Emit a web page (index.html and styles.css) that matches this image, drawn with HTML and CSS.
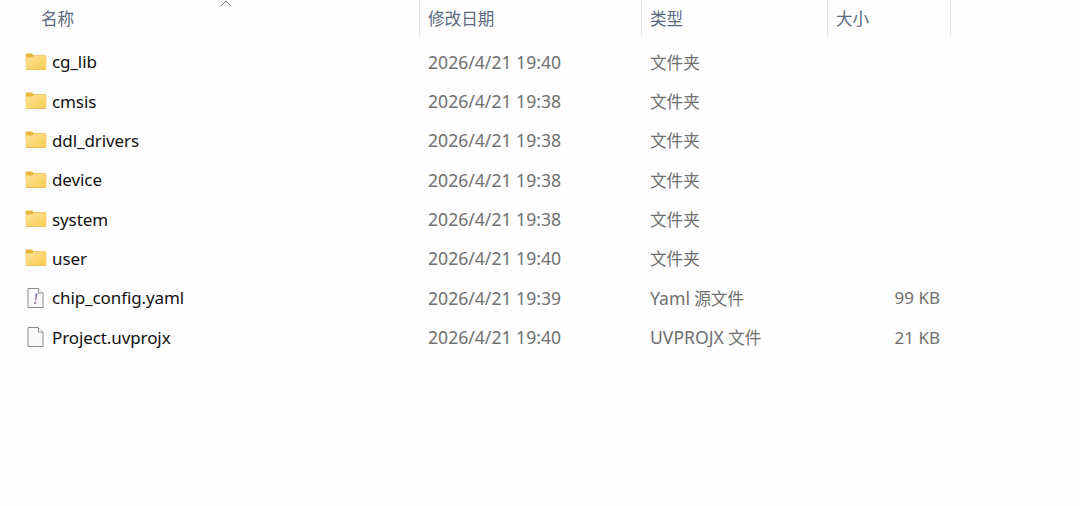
FILE: index.html
```html
<!DOCTYPE html>
<html lang="zh-CN">
<head>
  <meta charset="UTF-8">
  <title>Project</title>
  <link rel="stylesheet" href="styles.css">
</head>
<body>

  <!-- shared icons -->
  <svg class="sprite" width="0" height="0">
    <defs>
      <linearGradient id="folderFill" x1="0" y1="0" x2="1" y2="1">
        <stop offset="0" stop-color="#ffe49a"/>
        <stop offset="1" stop-color="#f8cb4e"/>
      </linearGradient>
    </defs>
    <symbol id="folder" viewBox="0 0 22 20">
      <path d="M.6 2.800Q.6 1.600 1.800 1.600H7L8.600 3.200H20Q21.200 3.200 21.200 4.400V10H.6Z" fill="#e8b83c"/>
      <path d="M.6 5.600H7.400L9 4H20.200Q21.200 4 21.200 5V16.800Q21.200 17.800 20.200 17.800H1.600Q.6 17.800 .6 16.800Z" fill="url(#folderFill)"/>
      <path d="M1 17.500H20.800" stroke="#e3b450" stroke-width=".7"/>
    </symbol>
    <symbol id="page" viewBox="0 0 22 22">
      <path d="M3 1.500H13.500L18 6V20.500H3Z" fill="#fafafa" stroke="#8c8c8c"/>
      <path d="M13.500 1.500V6H18" fill="#fff" stroke="#8c8c8c"/>
    </symbol>
  </svg>

  <div class="explorer">
    <div class="row header">
      <div class="cell name">名称
        <svg class="sort" viewBox="0 0 12 7"><path d="M1 6L6 1L11 6"/></svg>
      </div>
      <div class="cell">修改日期</div>
      <div class="cell">类型</div>
      <div class="cell">大小</div>
    </div>

    <div class="files">
      <div class="row">
        <div class="cell name"><svg class="icon folder"><use href="#folder"/></svg><span>cg_lib</span></div>
        <div class="cell date">2026/4/21 19:40</div>
        <div class="cell">文件夹</div>
        <div class="cell size"></div>
      </div>
      <div class="row">
        <div class="cell name"><svg class="icon folder"><use href="#folder"/></svg><span>cmsis</span></div>
        <div class="cell date">2026/4/21 19:38</div>
        <div class="cell">文件夹</div>
        <div class="cell size"></div>
      </div>
      <div class="row">
        <div class="cell name"><svg class="icon folder"><use href="#folder"/></svg><span>ddl_drivers</span></div>
        <div class="cell date">2026/4/21 19:38</div>
        <div class="cell">文件夹</div>
        <div class="cell size"></div>
      </div>
      <div class="row">
        <div class="cell name"><svg class="icon folder"><use href="#folder"/></svg><span>device</span></div>
        <div class="cell date">2026/4/21 19:38</div>
        <div class="cell">文件夹</div>
        <div class="cell size"></div>
      </div>
      <div class="row">
        <div class="cell name"><svg class="icon folder"><use href="#folder"/></svg><span>system</span></div>
        <div class="cell date">2026/4/21 19:38</div>
        <div class="cell">文件夹</div>
        <div class="cell size"></div>
      </div>
      <div class="row">
        <div class="cell name"><svg class="icon folder"><use href="#folder"/></svg><span>user</span></div>
        <div class="cell date">2026/4/21 19:40</div>
        <div class="cell">文件夹</div>
        <div class="cell size"></div>
      </div>
      <div class="row">
        <div class="cell name">
          <svg class="icon" viewBox="0 0 22 22">
            <use href="#page"/>
            <path d="M10.700 6.500H12.600L11.200 13.500H10.100Z" fill="#8a6aa0"/>
            <circle cx="10" cy="16" r="1.100" fill="#8a6aa0"/>
          </svg>
          <span>chip_config.yaml</span>
        </div>
        <div class="cell date">2026/4/21 19:39</div>
        <div class="cell"><div><span class="latin">Yaml</span> 源文件</div></div>
        <div class="cell size">99 KB</div>
      </div>
      <div class="row">
        <div class="cell name"><svg class="icon"><use href="#page"/></svg><span>Project.uvprojx</span></div>
        <div class="cell date">2026/4/21 19:40</div>
        <div class="cell"><div><span class="latin">UVPROJX</span> 文件</div></div>
        <div class="cell size">21 KB</div>
      </div>
    </div>
  </div>

</body>
</html>
```
FILE: styles.css
```css
body {
  margin: 0;
  background: #fefefe;
  font-family: "Noto Sans", "Noto Sans CJK SC", sans-serif;
  font-size: 16.6px;
  color: #707070;
}

.sprite {
  display: block;
}

.row {
  display: grid;
  grid-template-columns: 420px 222px 186px 123px;
  height: 39.36px;
}

.cell {
  box-sizing: border-box;
  display: flex;
  align-items: center;
  padding: 0 11px 0 8px;
  white-space: nowrap;
}

.header {
  height: 36px;
  color: #5c6a80;
}

.header .cell {
  padding-bottom: 1px;
  border-right: 1px solid #e4e4e4;
}

.header .name {
  position: relative;
  padding-left: 41px;
}

/* arrow above the sorted column */
.sort {
  position: absolute;
  left: 220px;
  top: 0;
  width: 12px;
  height: 7px;
  fill: none;
  stroke: #777;
}

.files {
  padding-top: 6px;
}

.files .name {
  gap: 5px;
  padding-left: 25px;
  font-size: 17px;
  letter-spacing: -0.1px;
  color: #111;
}

.icon {
  width: 22px;
  height: 22px;
}

.icon.folder {
  height: 20px;
}

.date,
.latin {
  font-size: 17.6px;
}

.size {
  justify-content: flex-end;
  font-size: 17px;
}
```
